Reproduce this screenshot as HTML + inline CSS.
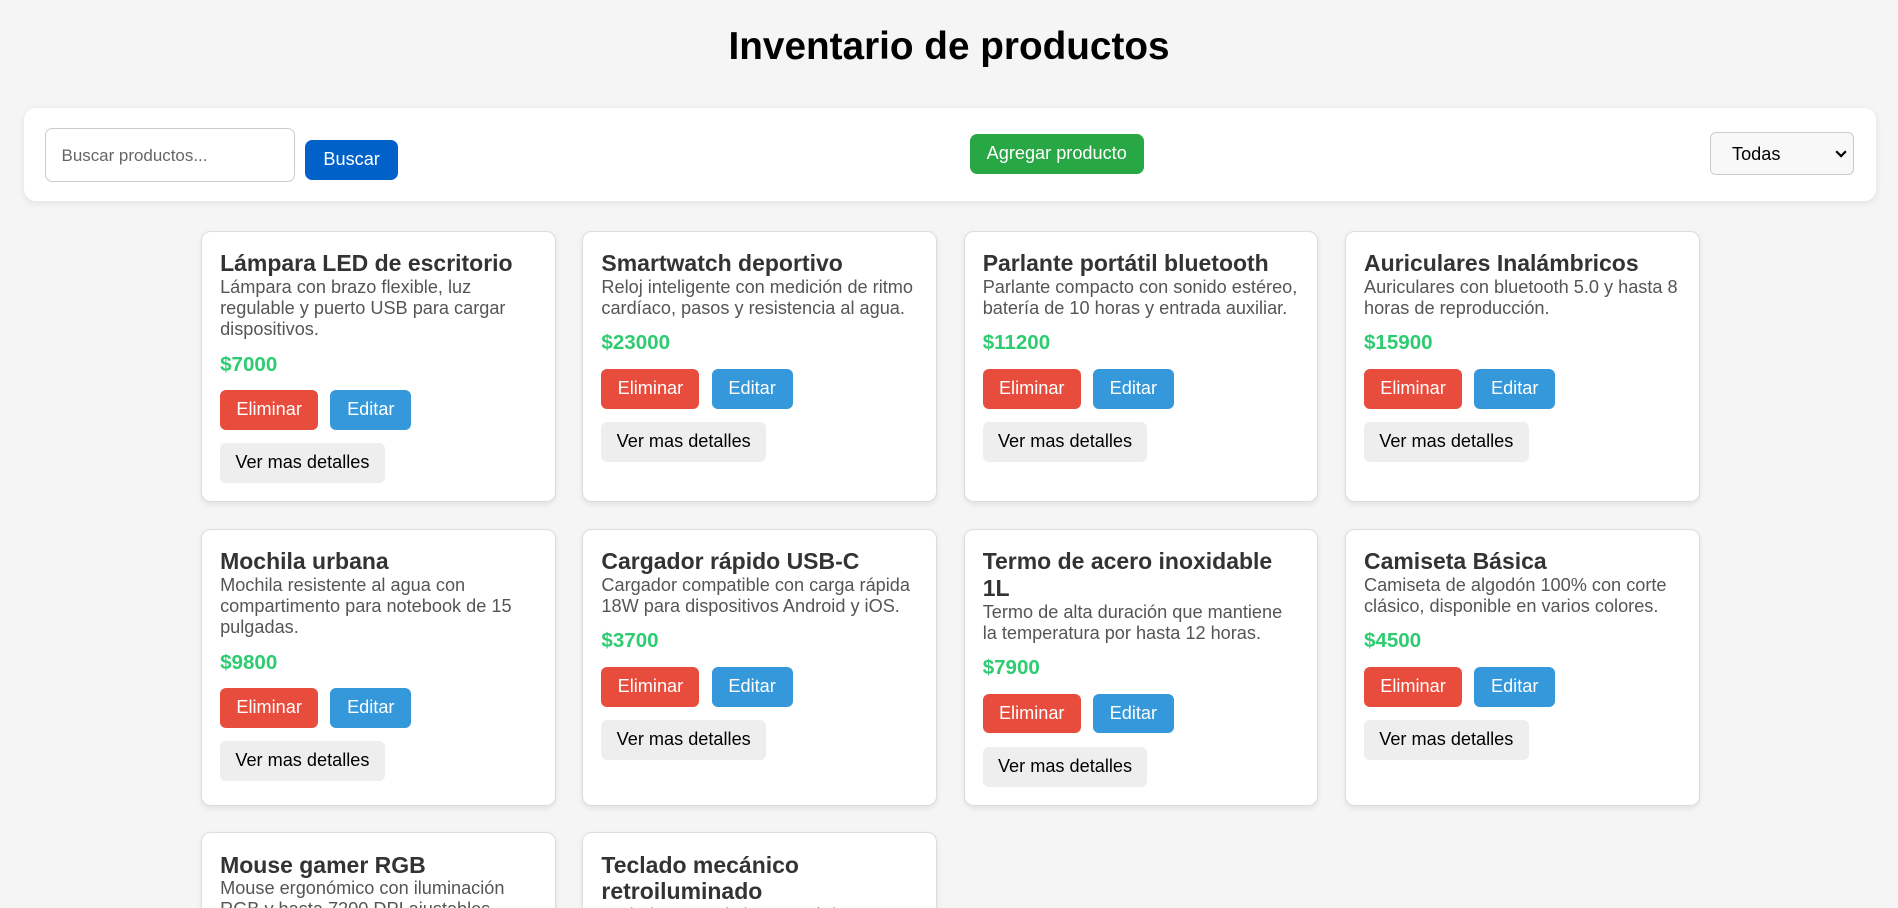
<!DOCTYPE html>
<html><head><meta charset="utf-8"><style>
html{margin:0;padding:0;height:908px;overflow:hidden}
body{margin:0;padding:0;zoom:1.2105;background:#f5f5f5;font-family:"Liberation Sans",Arial,sans-serif;width:1568px;overflow:hidden;height:750px;position:relative}
h1{text-align:center;font-size:32px;margin:21px 0 31px;line-height:37px;color:#000}
.bar{margin:0 18px 0 20px;background:#fff;border-radius:10px;box-shadow:0 2px 6px rgba(0,0,0,.08);height:77px;position:relative}
.inp{position:absolute;left:17px;top:17px;border:1px solid #ccc;border-radius:6px;box-sizing:border-box;width:207px;height:44px;color:#666;font-size:14px;padding:14px 0 0 13px}
.bus{position:absolute;left:232px;top:27px;width:77px;height:33px;background:#0062c8;color:#fff;border-radius:6px;font-size:15px;text-align:center;line-height:33px}
.add{position:absolute;left:781px;top:22px;width:144px;height:33px;background:#28a745;color:#fff;border-radius:6px;font-size:15px;text-align:center;line-height:33px}
.sel{position:absolute;left:1393px;top:20px;width:119px;height:36px;box-sizing:border-box;border:1px solid #ccc;border-radius:5px;font-size:15px;padding:9px 0 0 17px;color:#000;background:#f8f8f8}
.sel svg{position:absolute;right:5px;top:14px}
.grid{position:absolute;left:166px;top:170px;display:grid;grid-template-columns:repeat(4,293px);column-gap:22px;row-gap:22px}
.card{background:#fff;border:1px solid #ddd;border-radius:8px;box-shadow:0 2px 5px rgba(0,0,0,.08);padding:15px 15px 15px;box-sizing:border-box}
.card h3{margin:0;font-size:19px;line-height:22px;color:#333}
.card p{margin:0;font-size:15px;line-height:17.5px;color:#555}
.pr{color:#2ecc71;font-weight:bold;font-size:17px;margin:10px 0 12px;line-height:19px}
.row{display:flex;gap:10px}
.b{display:inline-block;height:33px;line-height:33px;border-radius:5px;color:#fff;font-size:15px;text-align:center}
.e{width:81px;background:#e74c3c}
.d{width:67px;background:#3498db}
.v{display:block;width:136px;background:#eee;color:#000;margin-top:11px}
</style></head><body>
<h1>Inventario de productos</h1>
<div class="bar">
<div class="inp">Buscar productos...</div>
<div class="bus">Buscar</div>
<div class="add">Agregar producto</div>
<div class="sel">Todas<svg width="10" height="7" viewBox="0 0 10 7"><path d="M1 1l4 4 4-4" fill="none" stroke="#000" stroke-width="1.8"/></svg></div>
</div>
<div class="grid">
<div class="card"><h3>Lámpara LED de escritorio</h3><p>Lámpara con brazo flexible, luz regulable y puerto USB para cargar dispositivos.</p><div class="pr">$7000</div><div class="row"><span class="b e">Eliminar</span><span class="b d">Editar</span></div><span class="b v">Ver mas detalles</span></div>
<div class="card"><h3>Smartwatch deportivo</h3><p>Reloj inteligente con medición de ritmo cardíaco, pasos y resistencia al agua.</p><div class="pr">$23000</div><div class="row"><span class="b e">Eliminar</span><span class="b d">Editar</span></div><span class="b v">Ver mas detalles</span></div>
<div class="card"><h3>Parlante portátil bluetooth</h3><p>Parlante compacto con sonido estéreo, batería de 10 horas y entrada auxiliar.</p><div class="pr">$11200</div><div class="row"><span class="b e">Eliminar</span><span class="b d">Editar</span></div><span class="b v">Ver mas detalles</span></div>
<div class="card"><h3>Auriculares Inalámbricos</h3><p>Auriculares con bluetooth 5.0 y hasta 8 horas de reproducción.</p><div class="pr">$15900</div><div class="row"><span class="b e">Eliminar</span><span class="b d">Editar</span></div><span class="b v">Ver mas detalles</span></div>
<div class="card"><h3>Mochila urbana</h3><p>Mochila resistente al agua con compartimento para notebook de 15 pulgadas.</p><div class="pr">$9800</div><div class="row"><span class="b e">Eliminar</span><span class="b d">Editar</span></div><span class="b v">Ver mas detalles</span></div>
<div class="card"><h3>Cargador rápido USB-C</h3><p>Cargador compatible con carga rápida 18W para dispositivos Android y iOS.</p><div class="pr">$3700</div><div class="row"><span class="b e">Eliminar</span><span class="b d">Editar</span></div><span class="b v">Ver mas detalles</span></div>
<div class="card"><h3>Termo de acero inoxidable 1L</h3><p>Termo de alta duración que mantiene la temperatura por hasta 12 horas.</p><div class="pr">$7900</div><div class="row"><span class="b e">Eliminar</span><span class="b d">Editar</span></div><span class="b v">Ver mas detalles</span></div>
<div class="card"><h3>Camiseta Básica</h3><p>Camiseta de algodón 100% con corte clásico, disponible en varios colores.</p><div class="pr">$4500</div><div class="row"><span class="b e">Eliminar</span><span class="b d">Editar</span></div><span class="b v">Ver mas detalles</span></div>
<div class="card"><h3>Mouse gamer RGB</h3><p>Mouse ergonómico con iluminación RGB y hasta 7200 DPI ajustables.</p><div class="pr">$8500</div><div class="row"><span class="b e">Eliminar</span><span class="b d">Editar</span></div><span class="b v">Ver mas detalles</span></div>
<div class="card"><h3>Teclado mecánico retroiluminado</h3><p>Teclado con switches mecánicos e iluminación LED.</p><div class="pr">$12500</div><div class="row"><span class="b e">Eliminar</span><span class="b d">Editar</span></div><span class="b v">Ver mas detalles</span></div>
</div>
</body></html>
